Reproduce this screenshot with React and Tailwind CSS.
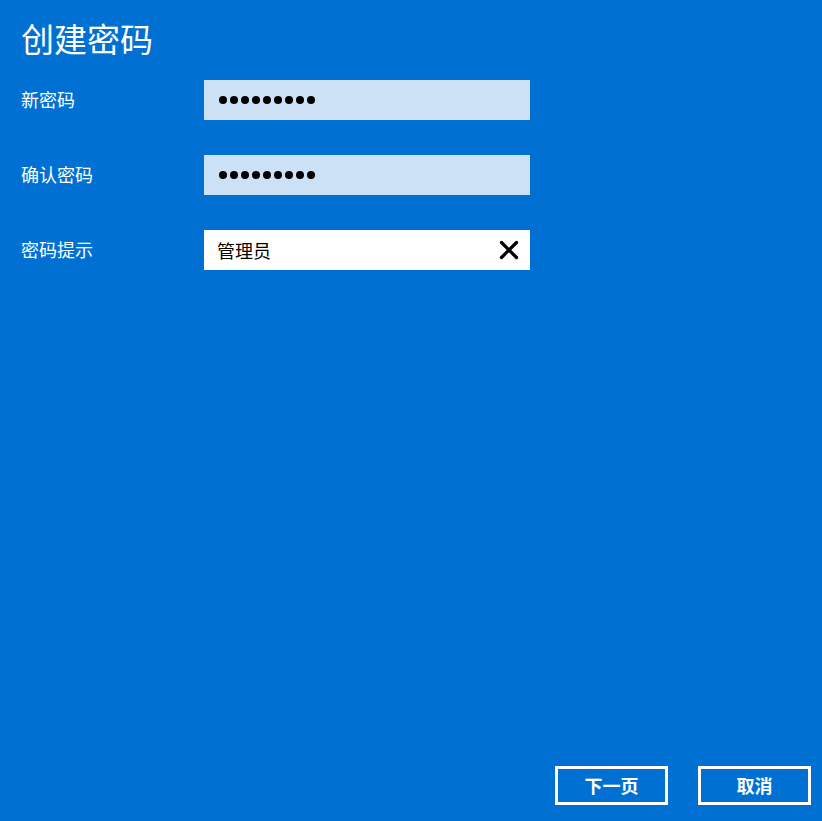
import { X } from 'lucide-react';

const font = { fontFamily: '"Noto Sans CJK SC", "Microsoft YaHei", sans-serif' };

function Dots() {
  return (
    <div className="flex gap-[3px]">
      {[...Array(9)].map((_, i) => (
        <span key={i} className="w-[8px] h-[8px] rounded-full bg-black" />
      ))}
    </div>
  );
}

function Row({ label, children }) {
  return (
    <div className="flex items-center">
      <div className="w-[183px] text-[18px] text-white leading-none -mt-[2px]">{label}</div>
      {children}
    </div>
  );
}

export default function App() {
  return (
    <div className="h-[821px] w-full bg-[#0071d3] flex flex-col px-[21px] pt-[18px] pb-[16px]" style={font}>
      <h1 className="text-[33px] text-white leading-[40px] mb-[22px]">创建密码</h1>

      <div className="flex flex-col gap-[35px]">
        <Row label="新密码">
          <div className="w-[326px] h-[40px] bg-[#cce1f6] flex items-center px-[15px]">
            <Dots />
          </div>
        </Row>
        <Row label="确认密码">
          <div className="w-[326px] h-[40px] bg-[#cce1f6] flex items-center px-[15px]">
            <Dots />
          </div>
        </Row>
        <Row label="密码提示">
          <div className="w-[326px] h-[40px] bg-white flex items-center justify-between pl-[13px] pr-[6px]">
            <span className="text-[18px] text-black leading-none">管理员</span>
            <X size={30} strokeWidth={2.6} className="text-black" />
          </div>
        </Row>
      </div>

      <div className="mt-auto flex justify-end gap-[30px] -mr-[10px]">
        <button className="w-[113px] h-[39px] border-[3px] border-white text-white text-[18px] font-bold">下一页</button>
        <button className="w-[113px] h-[39px] border-[3px] border-white text-white text-[18px] font-bold">取消</button>
      </div>
    </div>
  );
}
